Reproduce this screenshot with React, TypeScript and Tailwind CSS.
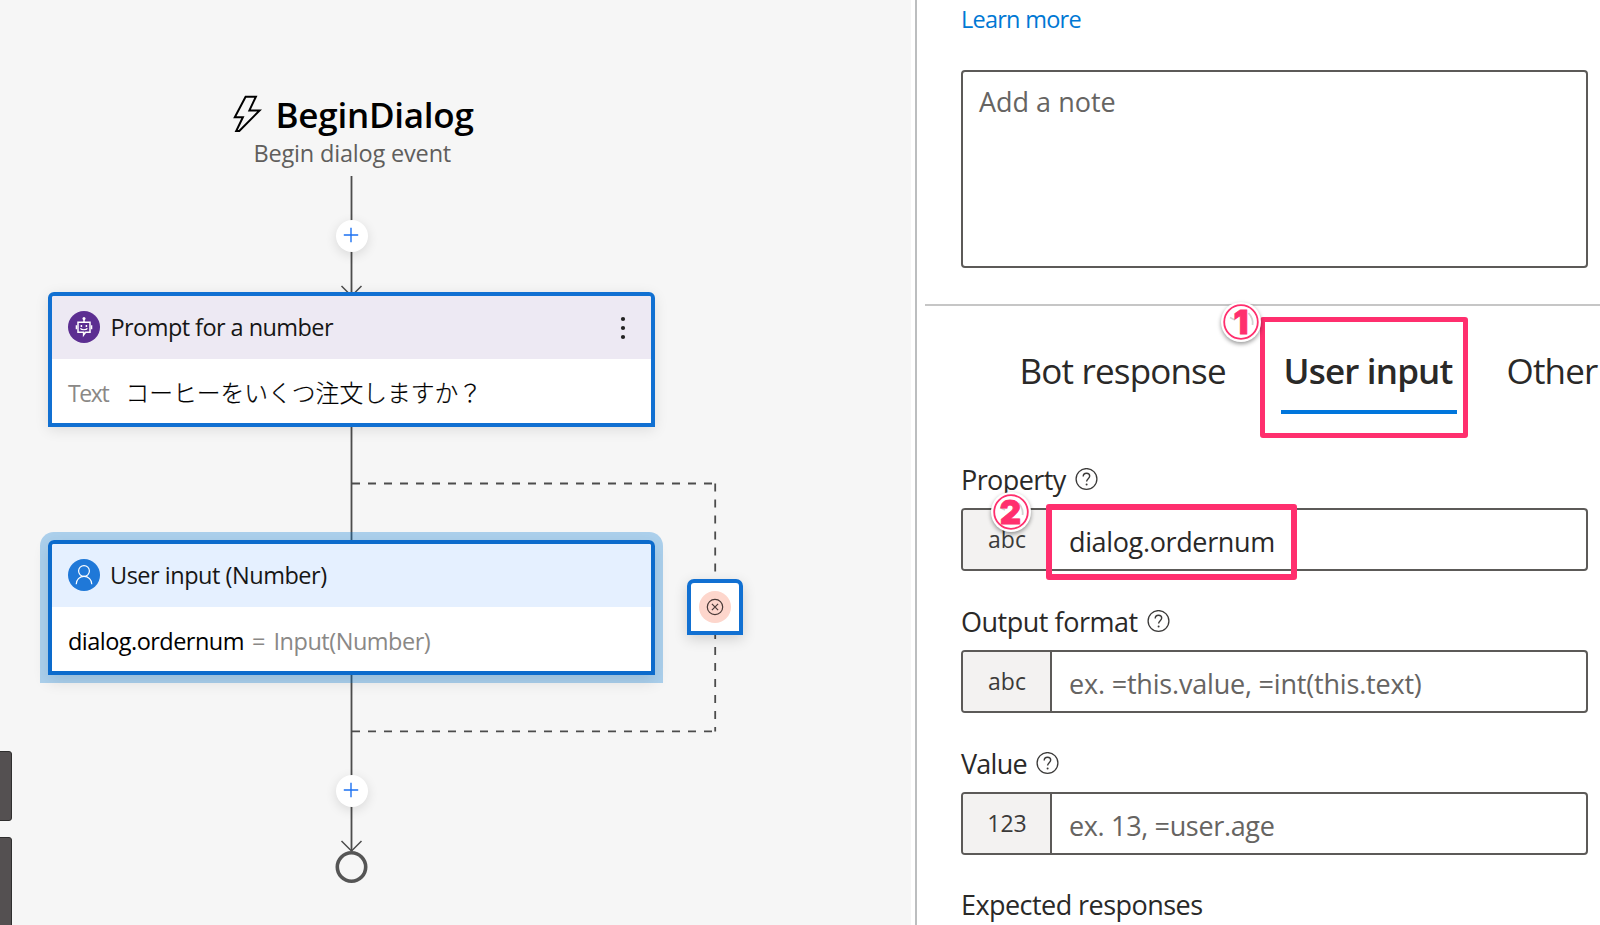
import React from "react";

function AddButton() {
  return (
    <div className="flex h-8 w-8 items-center justify-center rounded-full bg-white shadow-[0_3px_12px_rgba(0,0,0,0.12)]">
      <svg width="16" height="16" viewBox="0 0 16 16" className="-mt-[2px] -ml-[1px]">
        <path d="M8 0.8V15.2M0.8 8H15.2" stroke="#1d72f2" strokeWidth="1.4" fill="none" />
      </svg>
    </div>
  );
}

function HelpIcon() {
  return (
    <svg width="23" height="23" viewBox="0 0 23 23" fill="none" className="shrink-0">
      <circle cx="11.5" cy="11" r="10.4" stroke="#3b3a39" strokeWidth="1.3" />
      <path
        d="M8.2 8.4C8.2 6.5 9.6 5.2 11.5 5.2C13.4 5.2 14.7 6.4 14.7 8.1C14.7 10.8 11.6 10.7 11.6 13.6"
        stroke="#3b3a39"
        strokeWidth="1.4"
      />
      <circle cx="11.6" cy="16.4" r="1" fill="#3b3a39" />
    </svg>
  );
}

function BotIcon() {
  return (
    <svg width="32" height="32" viewBox="0 0 32 32" fill="none" className="-mt-[1px] shrink-0">
      <circle cx="16" cy="16" r="16" fill="#5c2e91" />
      <circle cx="16" cy="7.4" r="1.5" fill="#fff" />
      <path d="M16 8V11.5" stroke="#fff" strokeWidth="1.5" />
      <path d="M10 11.2H22V21.3H17.6L15.6 24V21.3H10Z" stroke="#fff" strokeWidth="1.5" />
      <path d="M8.4 14.3V18.2M23.6 14.3V18.2" stroke="#fff" strokeWidth="1.4" />
      <path d="M13.4 13.9V16M18.4 13.9V16" stroke="#fff" strokeWidth="1.5" />
      <path d="M12.4 17.4C13.4 19.2 18.4 19.2 19.4 17.4" stroke="#fff" strokeWidth="1.2" />
    </svg>
  );
}

function UserIcon() {
  return (
    <svg width="32" height="32" viewBox="0 0 32 32" fill="none" className="-mt-[1px] shrink-0">
      <circle cx="16" cy="16" r="16" fill="#1f78d8" />
      <circle cx="16" cy="12" r="5.4" stroke="#fff" strokeWidth="1.2" />
      <path d="M8.2 25.3C8.2 20.8 11.6 17.4 16 17.4C20.4 17.4 23.8 20.8 23.8 25.3" stroke="#fff" strokeWidth="1.2" />
    </svg>
  );
}

function StepBadge({ n }: { n: string }) {
  return (
    <div className="relative flex h-10 w-10 items-center justify-center rounded-full bg-white shadow-[0_2px_4px_rgba(0,0,0,0.4)]">
      <svg width="40" height="40" viewBox="0 0 40 40" fill="none" className="absolute inset-0">
        <path d="M9 15.5L14 18M27.5 11C31 15 32.5 18 31.5 23" stroke="#d2d2d2" strokeWidth="1.8" />
        <circle cx="20" cy="20" r="16.8" stroke="#ff2f6e" strokeWidth="1.8" />
      </svg>
      <span className="relative font-['Inter',sans-serif] text-[33px] leading-[24px] font-black text-[#ff2f6e] [-webkit-text-stroke:0.8px_#ff2f6e]">{n}</span>
    </div>
  );
}

function Field({ label, tracking, prefix, children }: { label: string; tracking: string; prefix: string; children: React.ReactNode }) {
  return (
    <div className="mb-8">
      <div className="flex h-9 items-center gap-[9px] text-[27px] leading-9">
        <span className={tracking}>{label}</span>
        <HelpIcon />
      </div>
      <div className="mt-[11px] flex h-[63px] overflow-hidden rounded-[4px] border-2 border-[#5c5a58]">
        <div className="flex w-[89px] items-center justify-center border-r-2 border-[#5c5a58] bg-[#f3f2f1] pb-[2px] pl-[1px] text-[23px] leading-8 text-[#3b3a39]">
          {prefix}
        </div>
        <div className="pt-[14px] pl-[17px] text-[27px] leading-9">{children}</div>
      </div>
    </div>
  );
}

export default function App() {
  return (
    <div className="relative flex h-[925px] w-[1600px] overflow-hidden bg-white font-['Open_Sans','Noto_Sans',sans-serif] text-black">
      <div className="relative h-full w-[911px] shrink-0 overflow-hidden bg-[#f6f6f6]">
        <svg width="911" height="925" viewBox="0 0 911 925" fill="none" className="absolute inset-0">
          <g stroke="#4c4c4c" strokeWidth="1.8">
            <path d="M351.5 176V296M351.5 427V540M351.5 675V851" />
            <path d="M341.5 286L351.5 296L361.5 286M341.5 841L351.5 851L361.5 841" strokeWidth="1.5" />
            <g strokeDasharray="8 8">
              <path d="M352 483.5H715.5" />
              <path d="M715.2 483.5V579" />
              <path d="M715.2 631V731.5" />
              <path d="M352 731.3H715.5" />
            </g>
          </g>
          <circle cx="351.5" cy="867" r="14.2" stroke="#555555" strokeWidth="3.6" />
        </svg>

        <svg width="30" height="38" viewBox="0 0 30 38" fill="none" className="absolute left-[233px] top-[95px]">
          <path
            d="M12.6 1.7H22.9L16.4 15.4H26.6L6.3 36H3.2L9.9 22.3H1.8Z"
            stroke="#000"
            strokeWidth="2"
          />
        </svg>
        <div className="absolute top-[91px] left-[275.5px] text-[35px] leading-[48px] font-semibold tracking-[-0.25px] whitespace-nowrap">BeginDialog</div>
        <div className="absolute top-[137px] left-[253.5px] text-[23.5px] leading-8 tracking-[-0.18px] whitespace-nowrap text-[#605e5c]">Begin dialog event</div>
        <div className="absolute top-[219.5px] left-[335.5px]"><AddButton /></div>
        <div className="absolute top-[775px] left-[335.5px]"><AddButton /></div>

        <div className="absolute top-[292px] left-[48px] h-[135px] w-[607px] overflow-hidden rounded-t-[6px] border-4 border-[#1170d2] bg-white shadow-[0_3px_14px_rgba(0,0,0,0.1)]">
          <div className="flex h-[63px] items-center bg-[#ede9f3] pl-4">
            <BotIcon />
            <span className="-mt-[2px] ml-[10.5px] text-[23.5px] leading-8 tracking-[-0.56px] text-[#161616]">Prompt for a number</span>
            <svg width="6" height="24" viewBox="0 0 6 24" className="mr-[25px] ml-auto">
              <circle cx="3" cy="3" r="2.1" fill="#222" />
              <circle cx="3" cy="12" r="2.1" fill="#222" />
              <circle cx="3" cy="21" r="2.1" fill="#222" />
            </svg>
          </div>
          <div className="flex h-16 items-center pt-[3px] pl-[16px] leading-8">
            <span className="w-[57.5px] text-[23px] tracking-[-1.4px] text-[#8a8886]">Text</span>
            <span className="-mt-[2px] font-['Noto_Sans_CJK_JP',sans-serif] text-[23.77px] font-light [-webkit-text-stroke:0.2px_#000]">コーヒーをいくつ注文しますか？</span>
          </div>
        </div>

        <div className="absolute top-[540px] left-[48px] rounded-t-[6px] shadow-[0_0_0_8px_rgba(0,120,212,0.3),0_6px_16px_rgba(0,0,0,0.12)]">
          <div className="h-[135px] w-[607px] overflow-hidden rounded-t-[6px] border-4 border-[#0c6bcc] bg-white">
            <div className="flex h-[63px] items-center bg-[#e5f0ff] pl-4">
              <UserIcon />
              <span className="-mt-[2px] ml-[10px] text-[23.5px] leading-8 tracking-[-0.48px] text-[#161616]">User input (Number)</span>
            </div>
            <div className="flex h-16 items-center pt-[3px] pl-4 text-[23.5px] leading-8">
              <span className="w-[184px] tracking-[-0.53px]">dialog.ordernum</span>
              <span className="w-[21.5px] text-[#8a8886]">=</span>
              <span className="tracking-[-0.48px] text-[#8a8886]">Input(Number)</span>
            </div>
          </div>
        </div>

        <div className="absolute top-[579px] left-[687px] flex h-14 w-14 items-center justify-center rounded-t-[7px] border-4 border-[#1170d2] bg-white shadow-[0_4px_14px_rgba(0,0,0,0.16)]">
          <div className="flex h-8 w-8 items-center justify-center rounded-full bg-[#fdd6cc]">
            <svg width="18" height="18" viewBox="0 0 18 18" fill="none" stroke="#4a3a38" strokeWidth="1.2">
              <circle cx="9" cy="9" r="7.7" />
              <path d="M5.9 5.9L12.1 12.1M12.1 5.9L5.9 12.1" />
            </svg>
          </div>
        </div>

        <div className="absolute top-[751px] left-[-8px] h-[70px] w-5 rounded-[3px] border border-[#2f2e2e] bg-[#545051]" />
        <div className="absolute top-[837px] left-[-8px] h-[100px] w-5 rounded-[3px] border border-[#2f2e2e] bg-[#545051]" />
      </div>

      <div className="ml-1 w-[2px] shrink-0 bg-[#bcbebf]" />

      <div className="flex min-w-0 flex-1 flex-col text-[#2a2928]">
        <div className="pt-[3px] pr-3 pl-11">
          <div className="text-[23.5px] leading-8 tracking-[-0.75px] text-[#0078d4]">Learn more</div>
          <div className="mt-[35px] h-[198px] rounded-[4px] border-2 border-[#5c5a58] pt-[12px] pl-[16px] text-[27px] leading-9 text-[#666462]">Add a note</div>
        </div>
        <div className="mt-[36px] ml-2 h-[2px] shrink-0 bg-[#c6c6c6]" />
        <div className="flex h-[108px] shrink-0 overflow-hidden pt-[41px] pl-[102.5px] text-[35px] leading-[48px] whitespace-nowrap">
          <div className="w-[261px] shrink-0 tracking-[-0.82px]">Bot response</div>
          <div className="w-44 shrink-0 border-b-4 border-[#0076dc] pl-[3px] font-semibold tracking-[-0.82px]">User input</div>
          <div className="pl-[50px] tracking-[-0.8px]">Other</div>
        </div>
        <div className="pt-[47px] pr-3 pl-11">
          <Field label="Property" tracking="pt-[1px] tracking-[-0.6px]" prefix="abc">
            <span className="tracking-[-0.36px]">dialog.ordernum</span>
          </Field>
          <Field label="Output format" tracking="pt-[1px] tracking-[-0.48px]" prefix="abc">
            <span className="tracking-[-0.19px] text-[#666462]">ex. =this.value, =int(this.text)</span>
          </Field>
          <Field label="Value" tracking="pt-[1px] tracking-[-0.75px]" prefix="123">
            <span className="tracking-[-0.34px] text-[#666462]">ex. 13, =user.age</span>
          </Field>
          <div className="text-[27px] leading-9 tracking-[-0.55px]">Expected responses</div>
        </div>
      </div>

      <div className="absolute top-[316.5px] left-[1260px] h-[121px] w-[208px] rounded-[3px] border-[5px] border-[#ff2f6e]" />
      <div className="absolute top-[301.5px] left-[1221px]"><StepBadge n="1" /></div>
      <div className="absolute top-[504px] left-[1046px] h-[76px] w-[251px] rounded-[3px] border-[6px] border-[#ff2f6e]" />
      <div className="absolute top-[491.5px] left-[990.5px]"><StepBadge n="2" /></div>
    </div>
  );
}
